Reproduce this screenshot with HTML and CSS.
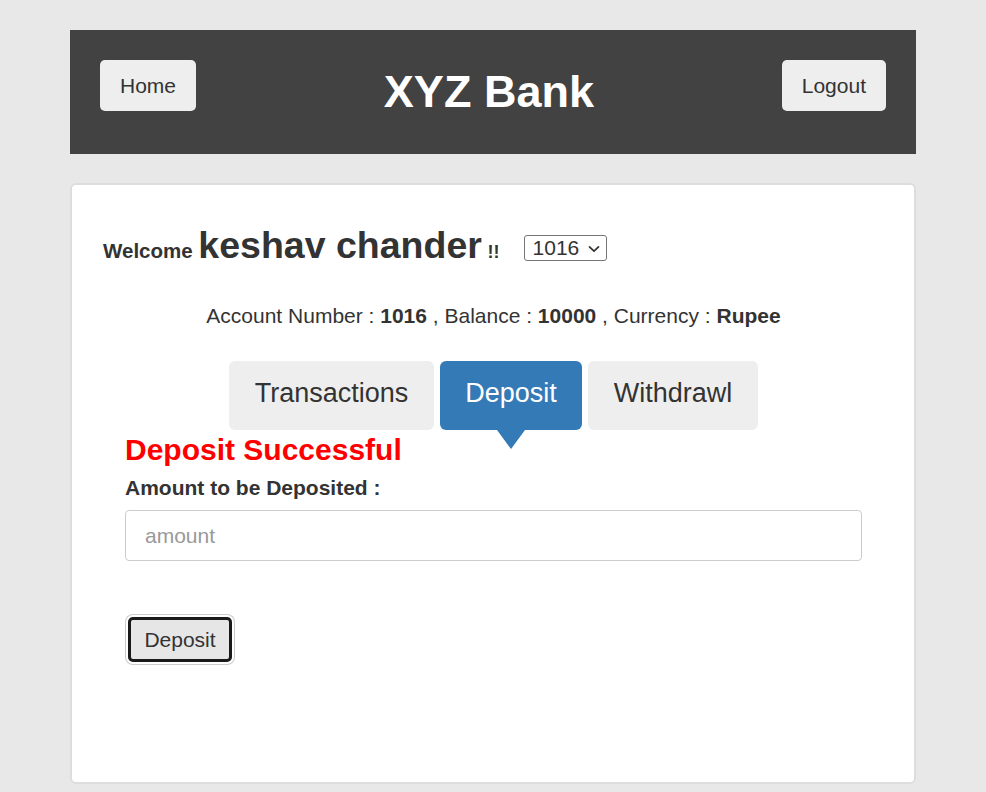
FILE: index.html
```html
<!DOCTYPE html>
<html lang="en">
<head>
<meta charset="utf-8">
<title>XYZ Bank</title>
<link rel="stylesheet" href="styles.css">
</head>
<body>
<div class="page">
  <header class="topbar">
    <button class="nav-btn">Home</button>
    <h1 class="brand">XYZ Bank</h1>
    <button class="nav-btn">Logout</button>
  </header>

  <main class="card">
    <div class="welcome-row">
      <span class="welcome">Welcome</span> <span class="name">keshav chander</span> <span class="bang">!!</span><span class="select-wrap"><select class="acct-select"><option>1016</option></select><svg class="chevron" width="12" height="8" viewBox="0 0 12 8" aria-hidden="true"><path d="M1.5 1.8 L6 6.2 L10.5 1.8" fill="none" stroke="#333" stroke-width="1.7" stroke-linecap="round" stroke-linejoin="round"/></svg></span>
    </div>

    <p class="acct-info">Account Number : <strong>1016</strong> , Balance : <strong>10000</strong> , Currency : <strong>Rupee</strong></p>

    <nav class="tabs">
      <button class="tab">Transactions</button>
      <button class="tab tab-active">Deposit</button>
      <button class="tab">Withdrawl</button>
    </nav>

    <form class="deposit-form">
      <h2 class="success">Deposit Successful</h2>
      <label class="field-label" for="amount">Amount to be Deposited :</label>
      <input class="amount-input" id="amount" type="number" placeholder="amount">
      <button type="button" class="submit-btn">Deposit</button>
    </form>
  </main>
</div>
</body>
</html>
```

FILE: styles.css
```css
* { box-sizing: border-box; }

body {
  margin: 0;
  background: #e8e8e8;
  font-family: "Liberation Sans", Arial, sans-serif;
  color: #333;
}

.page {
  width: 846px;
  margin: 30px auto 0;
}

.topbar {
  height: 124px;
  background: #424242;
  padding: 30px 30px 0;
  display: flex;
  justify-content: space-between;
  align-items: flex-start;
}

.nav-btn {
  height: 51px;
  padding: 0 20px;
  border: none;
  border-radius: 5px;
  background: #eeeeee;
  color: #333;
  font-family: inherit;
  font-size: 21px;
}

.brand {
  margin: 0;
  align-self: center;
  margin-top: -30px;
  color: #fff;
  font-size: 45px;
  font-weight: bold;
  line-height: 50px;
}

.card {
  margin-top: 29px;
  background: #fff;
  border: 2px solid #dddddd;
  border-radius: 6px;
  padding: 40px 30px 120px 31px;
}

.welcome-row {
  line-height: 40px;
  font-weight: bold;
  font-size: 20.5px;
}

.name { font-size: 37.5px; }
.bang { font-size: 18px; }

.select-wrap {
  position: relative;
  display: inline-block;
  margin-left: 24px;
  vertical-align: 3px;
}

.acct-select {
  -webkit-appearance: none;
  appearance: none;
  display: block;
  width: 83px;
  height: 26px;
  padding: 0 0 0 8px;
  font-family: inherit;
  font-size: 21px;
  line-height: 24px;
  font-weight: normal;
  color: #333;
  border: 1px solid #767676;
  border-radius: 3px;
  background: #fff;
}

.chevron {
  position: absolute;
  right: 7px;
  top: 10px;
  pointer-events: none;
}

.acct-info {
  margin: 32px 0 0;
  text-align: center;
  font-size: 21px;
  line-height: 24px;
}

.tabs {
  margin-top: 33px;
  display: flex;
  justify-content: center;
  gap: 6px;
}

.tab {
  position: relative;
  padding: 17px 25.5px 21px;
  border: none;
  border-radius: 6px;
  background: #eeeeee;
  color: #333;
  font-family: inherit;
  font-size: 27px;
  line-height: 31px;
}

.tab-active {
  background: #337ab7;
  color: #fff;
}

.tab-active::after {
  content: "";
  position: absolute;
  left: 50%;
  bottom: -19px;
  margin-left: -14px;
  border-left: 14px solid transparent;
  border-right: 14px solid transparent;
  border-top: 19px solid #337ab7;
}

.deposit-form {
  margin: 3px 22px 0;
  display: flex;
  flex-direction: column;
  align-items: flex-start;
}

.success {
  margin: 0;
  color: #ff0000;
  font-size: 30px;
  line-height: 33px;
  font-weight: bold;
}

.field-label {
  margin-top: 10px;
  font-size: 21px;
  line-height: 24px;
  font-weight: bold;
}

.amount-input {
  margin-top: 10px;
  width: 100%;
  height: 51px;
  padding: 0 19px;
  border: 1px solid #cccccc;
  border-radius: 4px;
  font-family: inherit;
  font-size: 21px;
  color: #333;
}

.amount-input::placeholder { color: #999; }

.submit-btn {
  margin: 56px 0 0 3px;
  width: 104px;
  height: 45px;
  border: 3px solid #1a1a1a;
  border-radius: 5px;
  background: #e6e6e6;
  color: #333;
  font-family: inherit;
  font-size: 21px;
  box-shadow: 0 0 0 2px #fff, 0 0 0 3px #cccccc;
}
```
